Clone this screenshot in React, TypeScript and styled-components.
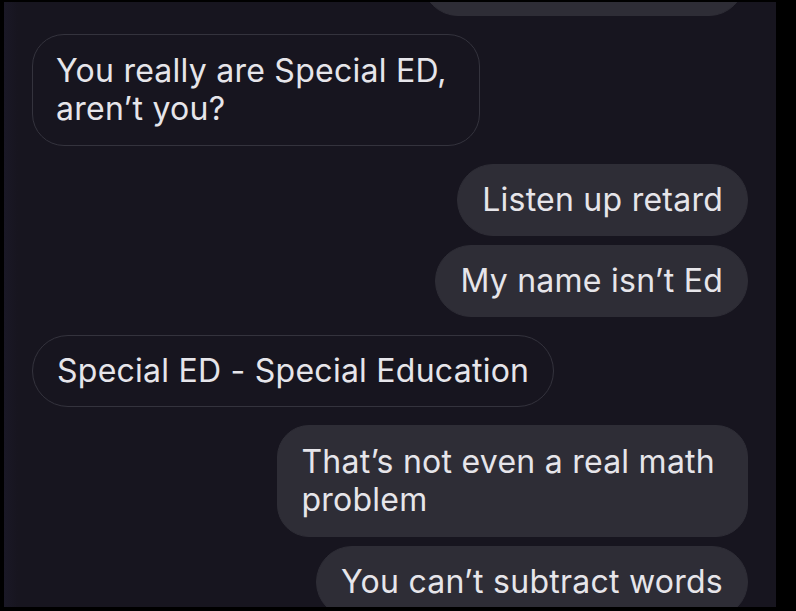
import styled, { createGlobalStyle } from 'styled-components';

type Message = {
  id: number;
  text: string;
  mine: boolean;
  tight?: boolean;
};

// first one sits mostly above the top edge, only its bottom shows
const messages: Message[] = [
  { id: 0, text: '', mine: true },
  { id: 1, text: 'You really are Special ED,\naren\u2019t you?', mine: false },
  { id: 2, text: 'Listen up retard', mine: true },
  { id: 3, text: 'My name isn\u2019t Ed', mine: true, tight: true },
  { id: 4, text: 'Special ED - Special Education', mine: false },
  { id: 5, text: 'That\u2019s not even a real math\nproblem', mine: true },
  { id: 6, text: 'You can\u2019t subtract words', mine: true, tight: true },
];

const GlobalStyle = createGlobalStyle`
  html, body {
    margin: 0;
    padding: 0;
    background: #000;
  }
  body {
    width: 796px;
    height: 611px;
    overflow: hidden;
  }
`;

const App = () => {
  return (
    <>
      <GlobalStyle />
      <Screen>
        <Thread>
          {messages.map((m) => {
            const lines = m.text.split('\n');
            return (
              <Row key={m.id} mine={m.mine} tight={m.tight}>
                <Bubble mine={m.mine} stub={m.text === ''} wrapped={lines.length > 1}>
                  {lines.map((line, i) => (
                    <span key={i}>{line}</span>
                  ))}
                </Bubble>
              </Row>
            );
          })}
        </Thread>
      </Screen>
    </>
  );
};

export default App;

const Screen = styled.div`
  margin: 2px 20px 0 4px;
  width: 772px;
  height: 605px;
  background: linear-gradient(to right, #1a1826 0px, #17151f 14px);
  overflow: hidden;
`;

const Thread = styled.div`
  display: flex;
  flex-direction: column;
  padding: 0 28px;
  margin-top: -58px;
`;

const Row = styled.div<{ mine: boolean; tight?: boolean }>`
  display: flex;
  justify-content: ${(p) => (p.mine ? 'flex-end' : 'flex-start')};
  margin-top: ${(p) => (p.tight ? '9px' : '18px')};
  &:first-child {
    margin-top: 0;
  }
`;

const Bubble = styled.div<{ mine: boolean; stub?: boolean; wrapped?: boolean }>`
  display: flex;
  flex-direction: column;
  box-sizing: border-box;
  min-height: 72px;
  width: ${(p) => (p.stub ? '323px' : 'auto')};
  margin-right: ${(p) => (p.stub ? '3px' : '0')};
  padding: ${(p) => (p.wrapped ? '17px 32px 17px 23px' : '16px 24px 16px 24px')};
  border-radius: ${(p) => (p.wrapped ? '32px' : '36px')};
  font-family: Inter, 'Liberation Sans', sans-serif;
  font-size: 32px;
  letter-spacing: 0.25px;
  line-height: 38px;
  color: #e6e5ea;
  background: ${(p) => (p.mine ? '#2e2d36' : '#17151f')};
  border: 1px solid ${(p) => (p.mine ? '#2e2d36' : '#34333d')};
`;
